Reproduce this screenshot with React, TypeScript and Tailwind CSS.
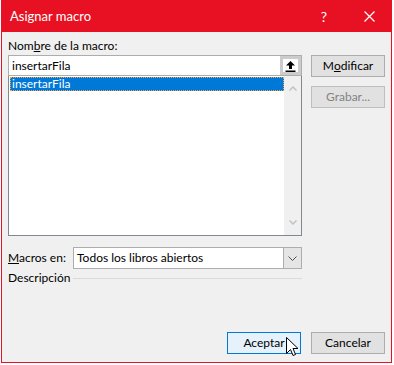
export default function App() {
  return (
    <div className="w-[394px] h-[365px] bg-white overflow-hidden font-['Lato',sans-serif] text-[12px] text-black">
      <div className="ml-px w-[391px] h-[363px] border border-[#e81123] bg-[#f0f0f0] flex flex-col">
        {/* Title bar */}
        <div className="h-[31px] bg-[#e81123] flex items-center text-white shrink-0">
          <span className="pl-[8px] text-[13px] leading-none">Asignar macro</span>
          <span className="ml-auto mr-[37px] text-[14px] leading-none">?</span>
          <svg width="11" height="11" viewBox="0 0 11 11" className="mr-[16px]">
            <path d="M0.5 0.5 L10.5 10.5 M10.5 0.5 L0.5 10.5" stroke="white" strokeWidth="1.2" />
          </svg>
        </div>

        {/* Body */}
        <div className="flex-1 flex flex-col px-[6px]">
          <div className="flex gap-[9px] pt-[5px]">
            <div className="w-[294px] flex flex-col">
              <div className="h-[18px] leading-[18px]">
                Nom<span className="underline">b</span>re de la macro:
              </div>
              {/* name input */}
              <div className="h-[21px] border border-[#adadad] bg-white flex">
                <span className="flex-1 pl-[3px] leading-[19px]">insertarFila</span>
                <div className="w-[21px] h-[19px] border-[3px] border-[#cccccc] bg-white flex items-center justify-center">
                  <svg width="11" height="12" viewBox="0 0 11 12">
                    <path d="M5.5 1 L10 5.5 L7 5.5 L7 9 L4 9 L4 5.5 L1 5.5 Z" fill="black" />
                    <rect x="0.5" y="10.5" width="10" height="1.5" fill="black" />
                  </svg>
                </div>
              </div>
              {/* list */}
              <div className="h-[160px] border border-[#828790] border-t-0 bg-white flex">
                <div className="flex-1 pt-[1px] pl-[1px]">
                  <div className="h-[14px] bg-[#0078d7] text-white leading-[14px] pl-[2px] outline outline-1 outline-dotted outline-[#f7a13b] -outline-offset-1">
                    insertarFila
                  </div>
                </div>
                <div className="w-[17px] bg-[#f0f0f0] flex flex-col items-center justify-between py-[10px]">
                  <svg width="8" height="5" viewBox="0 0 8 5">
                    <path d="M0.5 4.5 L4 1 L7.5 4.5" stroke="#c2c2c2" strokeWidth="1.5" fill="none" />
                  </svg>
                  <svg width="8" height="5" viewBox="0 0 8 5">
                    <path d="M0.5 0.5 L4 4 L7.5 0.5" stroke="#c2c2c2" strokeWidth="1.5" fill="none" />
                  </svg>
                </div>
              </div>
            </div>
            {/* right buttons */}
            <div className="pt-[18px] flex flex-col gap-[9px]">
              <div className="w-[74px] h-[22px] border border-[#adadad] bg-[#e1e1e1] flex items-center justify-center">
                M<span className="underline">o</span>dificar
              </div>
              <div className="w-[74px] h-[22px] border border-[#bfbfbf] bg-[#e1e1e1] flex items-center justify-center text-[#838383]">
                Grabar...
              </div>
            </div>
          </div>

          {/* Macros en */}
          <div className="flex items-center mt-[11px] w-[294px]">
            <span className="w-[65px]">
              <span className="underline">M</span>acros en:
            </span>
            <div className="flex-1 h-[22px] border border-[#adadad] bg-white flex">
              <span className="flex-1 pl-[3px] leading-[20px]">Todos los libros abiertos</span>
              <div className="w-[18px] h-[20px] border-l border-[#adadad] bg-[#e5e5e5] flex items-center justify-center">
                <svg width="9" height="5" viewBox="0 0 9 5">
                  <path d="M0.5 0.5 L4.5 4.5 L8.5 0.5" stroke="#505050" strokeWidth="1" fill="none" />
                </svg>
              </div>
            </div>
          </div>

          {/* Descripción */}
          <div className="flex items-center w-[294px]">
            <span className="w-[65px]">Descripción</span>
            <div className="flex-1 h-px bg-[#dadada]"></div>
          </div>

          {/* bottom buttons */}
          <div className="mt-auto mb-[8px] flex justify-end gap-[10px]">
            <div className="relative w-[74px] h-[22px] border border-[#0078d7] bg-[#e5f1fb] flex items-center justify-center">
              Aceptar
              <svg width="13" height="21" viewBox="0 0 13 21" className="absolute left-[58px] top-[4px]">
                <path
                  d="M0.5 0.5 L0.5 16.5 L4.5 12.5 L7 18.5 L9.5 17.5 L7 11.5 L12 11.5 Z"
                  fill="white"
                  stroke="black"
                  strokeWidth="1"
                  strokeLinejoin="round"
                />
              </svg>
            </div>
            <div className="w-[74px] h-[22px] border border-[#adadad] bg-[#e1e1e1] flex items-center justify-center">
              Cancelar
            </div>
          </div>
        </div>
      </div>
    </div>
  );
}
